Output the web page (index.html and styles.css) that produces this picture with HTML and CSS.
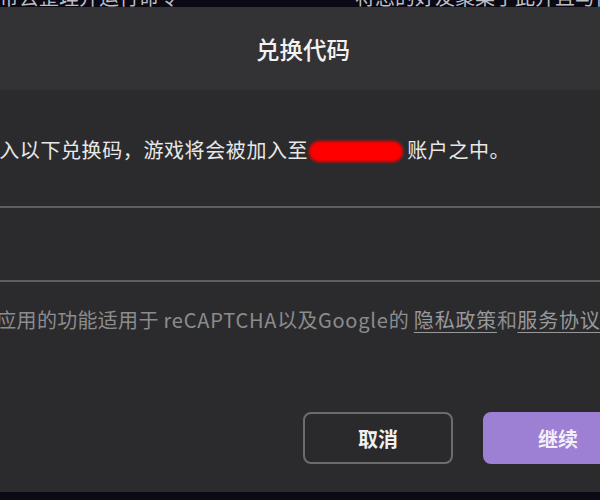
FILE: index.html
```html
<!DOCTYPE html>
<html lang="zh-CN">
<head>
<meta charset="utf-8">
<title>兑换代码</title>
<link rel="stylesheet" href="styles.css">
</head>
<body>
<div class="page">
  <div class="backdrop-top">
    <span class="bg-text bg-left">带去整理并运行命令</span>
    <span class="bg-text bg-right">将您的好友聚集于此并且与他们</span>
  </div>
  <div class="dialog">
    <div class="dialog-header">
      <h1 class="dialog-title">兑换代码</h1>
    </div>
    <div class="dialog-body">
      <p class="message">请输入以下兑换码，游戏将会被加入至<span class="redacted"></span>账户之中。</p>
      <div class="code-input"></div>
      <p class="privacy">本应用的功能适用于 <span class="latin">reCAPTCHA</span>以及<span class="latin">Google</span>的 <a class="link">隐私政策</a>和<a class="link">服务协议</a>。</p>
      <div class="actions">
        <button class="btn btn-cancel">取消</button>
        <button class="btn btn-continue">继续</button>
      </div>
    </div>
  </div>
  <div class="backdrop-bottom"></div>
</div>
</body>
</html>
```
FILE: styles.css
```css
html, body {
  margin: 0;
  padding: 0;
  width: 600px;
  height: 500px;
  overflow: hidden;
  background: #0c0b15;
}

.page {
  width: 600px;
  height: 500px;
  overflow: hidden;
  display: flex;
  flex-direction: column;
  font-family: "Noto Sans CJK SC", "Noto Sans", sans-serif;
}

.backdrop-top {
  height: 7px;
  flex: none;
  display: flex;
  overflow: hidden;
  background: #0b0a14;
}

.bg-text {
  font-size: 20px;
  line-height: 20px;
  margin-top: -13px;
  color: #bdbdc2;
  white-space: nowrap;
}

.bg-left {
  margin-left: -1px;
}

.bg-right {
  margin-left: 176px;
}

.dialog {
  flex: none;
  height: 485px;
  background: #2b2b2d;
  display: flex;
  flex-direction: column;
}

.dialog-header {
  height: 83px;
  background: #333335;
  display: flex;
  align-items: center;
  justify-content: center;
  padding-left: 6px;
}

.dialog-title {
  margin: 0;
  font-size: 23.5px;
  font-weight: 500;
  color: #f2f2f2;
  line-height: 30px;
}

.dialog-body {
  display: flex;
  flex-direction: column;
}

.message {
  margin: 48px 0 0 -42px;
  font-size: 20px;
  letter-spacing: 0.6px;
  line-height: 24px;
  color: #e8e8e8;
  white-space: nowrap;
}

.redacted {
  display: inline-block;
  width: 94px;
  height: 21px;
  margin: 0 4px 0 1px;
  vertical-align: -4px;
  background: #ff0000;
  border-radius: 10px;
  filter: blur(1.5px);
}

.code-input {
  margin-top: 44px;
  height: 72px;
  border-top: 2px solid #5e5e60;
  border-bottom: 2px solid #5e5e60;
  background: #2b2b2d;
}

.privacy {
  margin: 26px 0 0 -24px;
  font-size: 20px;
  line-height: 24px;
  letter-spacing: 0.3px;
  color: #8c8c8e;
  white-space: nowrap;
}

.latin {
  letter-spacing: 0.8px;
}

.link {
  color: #98989a;
  letter-spacing: 0.8px;
  text-decoration: underline;
  text-underline-offset: 4px;
  text-decoration-thickness: 1px;
}

.actions {
  margin-top: 80px;
  margin-right: -33px;
  display: flex;
  justify-content: flex-end;
  gap: 30px;
}

.btn {
  box-sizing: border-box;
  width: 150px;
  height: 52px;
  border-radius: 8px;
  font-family: "Noto Sans CJK SC", "Noto Sans", sans-serif;
  font-size: 20px;
  font-weight: 700;
  display: flex;
  align-items: center;
  justify-content: center;
  padding: 0;
}

.btn-cancel {
  background: #2a2a2c;
  border: 2px solid #6c6c6e;
  color: #f0f0f0;
}

.btn-continue {
  background: #9d80d3;
  border: 2px solid #9d80d3;
  color: #f3eefa;
}

.backdrop-bottom {
  flex: 1;
  background: #0c0b15;
}
```
